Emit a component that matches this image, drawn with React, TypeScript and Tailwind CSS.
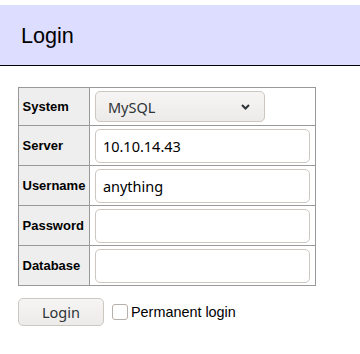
import React from "react";

const rows = [
  { label: "Server", value: "10.10.14.43" },
  { label: "Username", value: "anything" },
  { label: "Password", value: "" },
  { label: "Database", value: "" },
];

const App = () => {
  return (
    <div className="w-[360px] h-[354px] bg-white pt-[5px] font-['Liberation_Sans',Arial,sans-serif] text-[14.4px] leading-[18px] text-black">
      {/* heading */}
      <h2 className="bg-[#ddf] border-b border-black pl-[21px] pt-[17px] pb-[16px] text-[21.6px] leading-[27px] font-normal">
        Login
      </h2>

      <div className="ml-[18px] mt-[21px]">
        <table className="border-collapse">
          <tbody>
            <tr>
              <th className="border border-[#999] bg-[#eee] px-[3.5px] text-left text-[13px] font-bold align-middle">
                System
              </th>
              <td className="border border-[#999] px-[5px] py-[3px]">
                <div className="w-[170px] h-[31px] flex items-center justify-between rounded-[5px] border border-[#cdc7c2] bg-gradient-to-b from-[#f6f5f4] to-[#edebe9] pl-[12px] pr-[14px] font-['Noto_Sans',sans-serif] text-[14.5px] text-[#2e3436]">
                  <span>MySQL</span>
                  <svg width="9" height="6" viewBox="0 0 9 6" fill="none">
                    <path d="M1 1 L4.5 4.5 L8 1" stroke="#2e3436" strokeWidth="2" />
                  </svg>
                </div>
              </td>
            </tr>
            {rows.map((r) => (
              <tr key={r.label}>
                <th className="border border-[#999] bg-[#eee] px-[3.5px] text-left text-[13px] font-bold align-middle">
                  {r.label}
                </th>
                <td className="border border-[#999] px-[5px] py-[2.5px]">
                  <div className="w-[215px] h-[34px] flex items-center rounded-[5px] border border-[#cdc7c2] bg-white pl-[7px] font-['Noto_Sans',sans-serif] text-[14.5px] text-black">
                    {r.value}
                  </div>
                </td>
              </tr>
            ))}
          </tbody>
        </table>

        <div className="mt-[12px] flex items-center">
          <button className="w-[86px] h-[28px] rounded-[5px] border border-[#cdc7c2] bg-gradient-to-b from-[#f6f5f4] to-[#edebe9] font-['Noto_Sans',sans-serif] text-[14.5px] text-[#2e3436]">
            Login
          </button>
          <span className="ml-[8px] w-[16px] h-[16px] rounded-[3px] border border-[#b6b0ab] bg-white" />
          <span className="ml-[3px]">Permanent login</span>
        </div>
      </div>
    </div>
  );
};

export default App;
